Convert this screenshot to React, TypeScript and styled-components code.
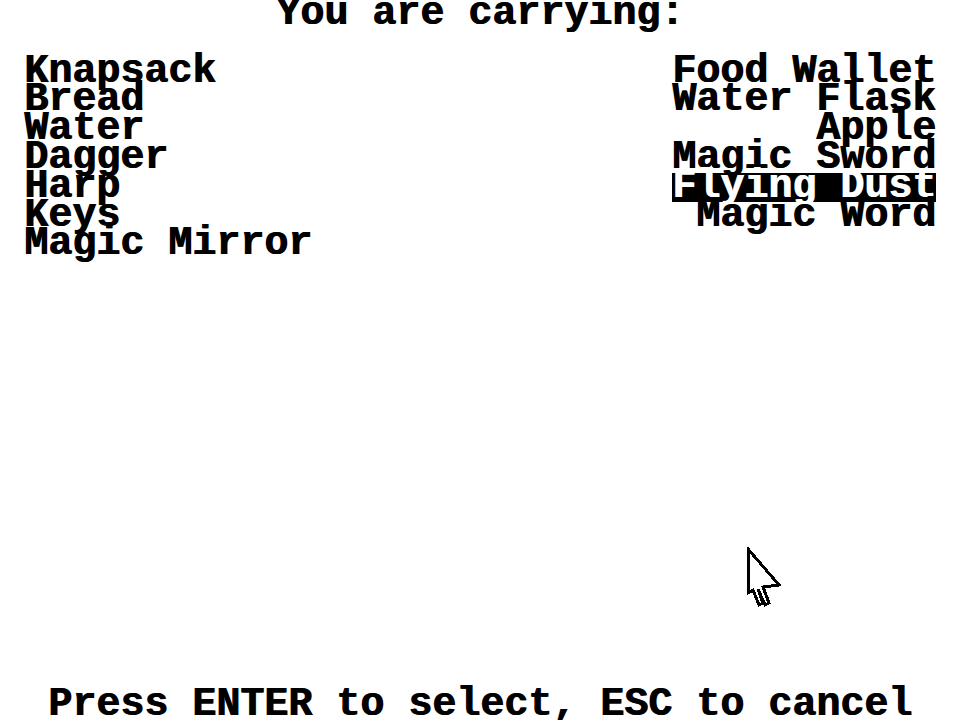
import React from "react";
import styled, { createGlobalStyle } from "styled-components";

const Global = createGlobalStyle`
  html, body { margin: 0; padding: 0; background: #fff; }
  body { overflow: hidden; }
`;

const ROW = 28.8;

const Screen = styled.div`
  position: relative;
  width: 960px;
  height: 720px;
  background: #fff;
  color: #000;
  font-family: "Liberation Mono", "Courier New", monospace;
  font-weight: 700;
  font-size: 40px;
  line-height: ${ROW}px;
  white-space: pre;
  display: flex;
  flex-direction: column;
  overflow: hidden;
  text-shadow: 1px 0 0 currentColor;
`;

const Title = styled.div`
  height: ${ROW}px;
  text-align: center;
  margin-bottom: ${ROW}px;
`;

const Columns = styled.div`
  display: flex;
  justify-content: space-between;
  padding: 0 24px;
`;

const Column = styled.div<{ $align: "left" | "right" }>`
  display: flex;
  flex-direction: column;
  align-items: ${(p) => (p.$align === "left" ? "flex-start" : "flex-end")};
`;

const Item = styled.div<{ $selected?: boolean }>`
  height: ${ROW}px;
  background: ${(p) => (p.$selected ? "#000" : "transparent")};
  color: ${(p) => (p.$selected ? "#fff" : "#000")};
`;

const Footer = styled.div`
  margin-top: auto;
  height: ${ROW}px;
  text-align: center;
`;

const Cursor = styled.svg`
  position: absolute;
  left: 745px;
  top: 547px;
  shape-rendering: crispEdges;
`;

const left = ["Knapsack", "Bread", "Water", "Dagger", "Harp", "Keys", "Magic Mirror"];
const right = ["Food Wallet", "Water Flask", "Apple", "Magic Sword", "Flying Dust", "Magic Word"];
const selected = "Flying Dust";

export default function App() {
  return (
    <>
      <Global />
      <Screen>
        <Title>You are carrying:</Title>
        <Columns>
          <Column $align="left">
            {left.map((t) => (
              <Item key={t}>{t}</Item>
            ))}
          </Column>
          <Column $align="right">
            {right.map((t) => (
              <Item key={t} $selected={t === selected}>
                {t}
              </Item>
            ))}
          </Column>
        </Columns>
        <Footer>Press ENTER to select, ESC to cancel</Footer>
        <Cursor width="38" height="62" viewBox="0 0 38 62">
          <path
            d="M3 2 L3 46 L8 43 L14 58 L18 56 L13 42 L20 58 L24 56 L18 40 L34 38 Z"
            fill="#fff"
            stroke="#000"
            strokeWidth="3"
            strokeLinejoin="miter"
          />
        </Cursor>
      </Screen>
    </>
  );
}
